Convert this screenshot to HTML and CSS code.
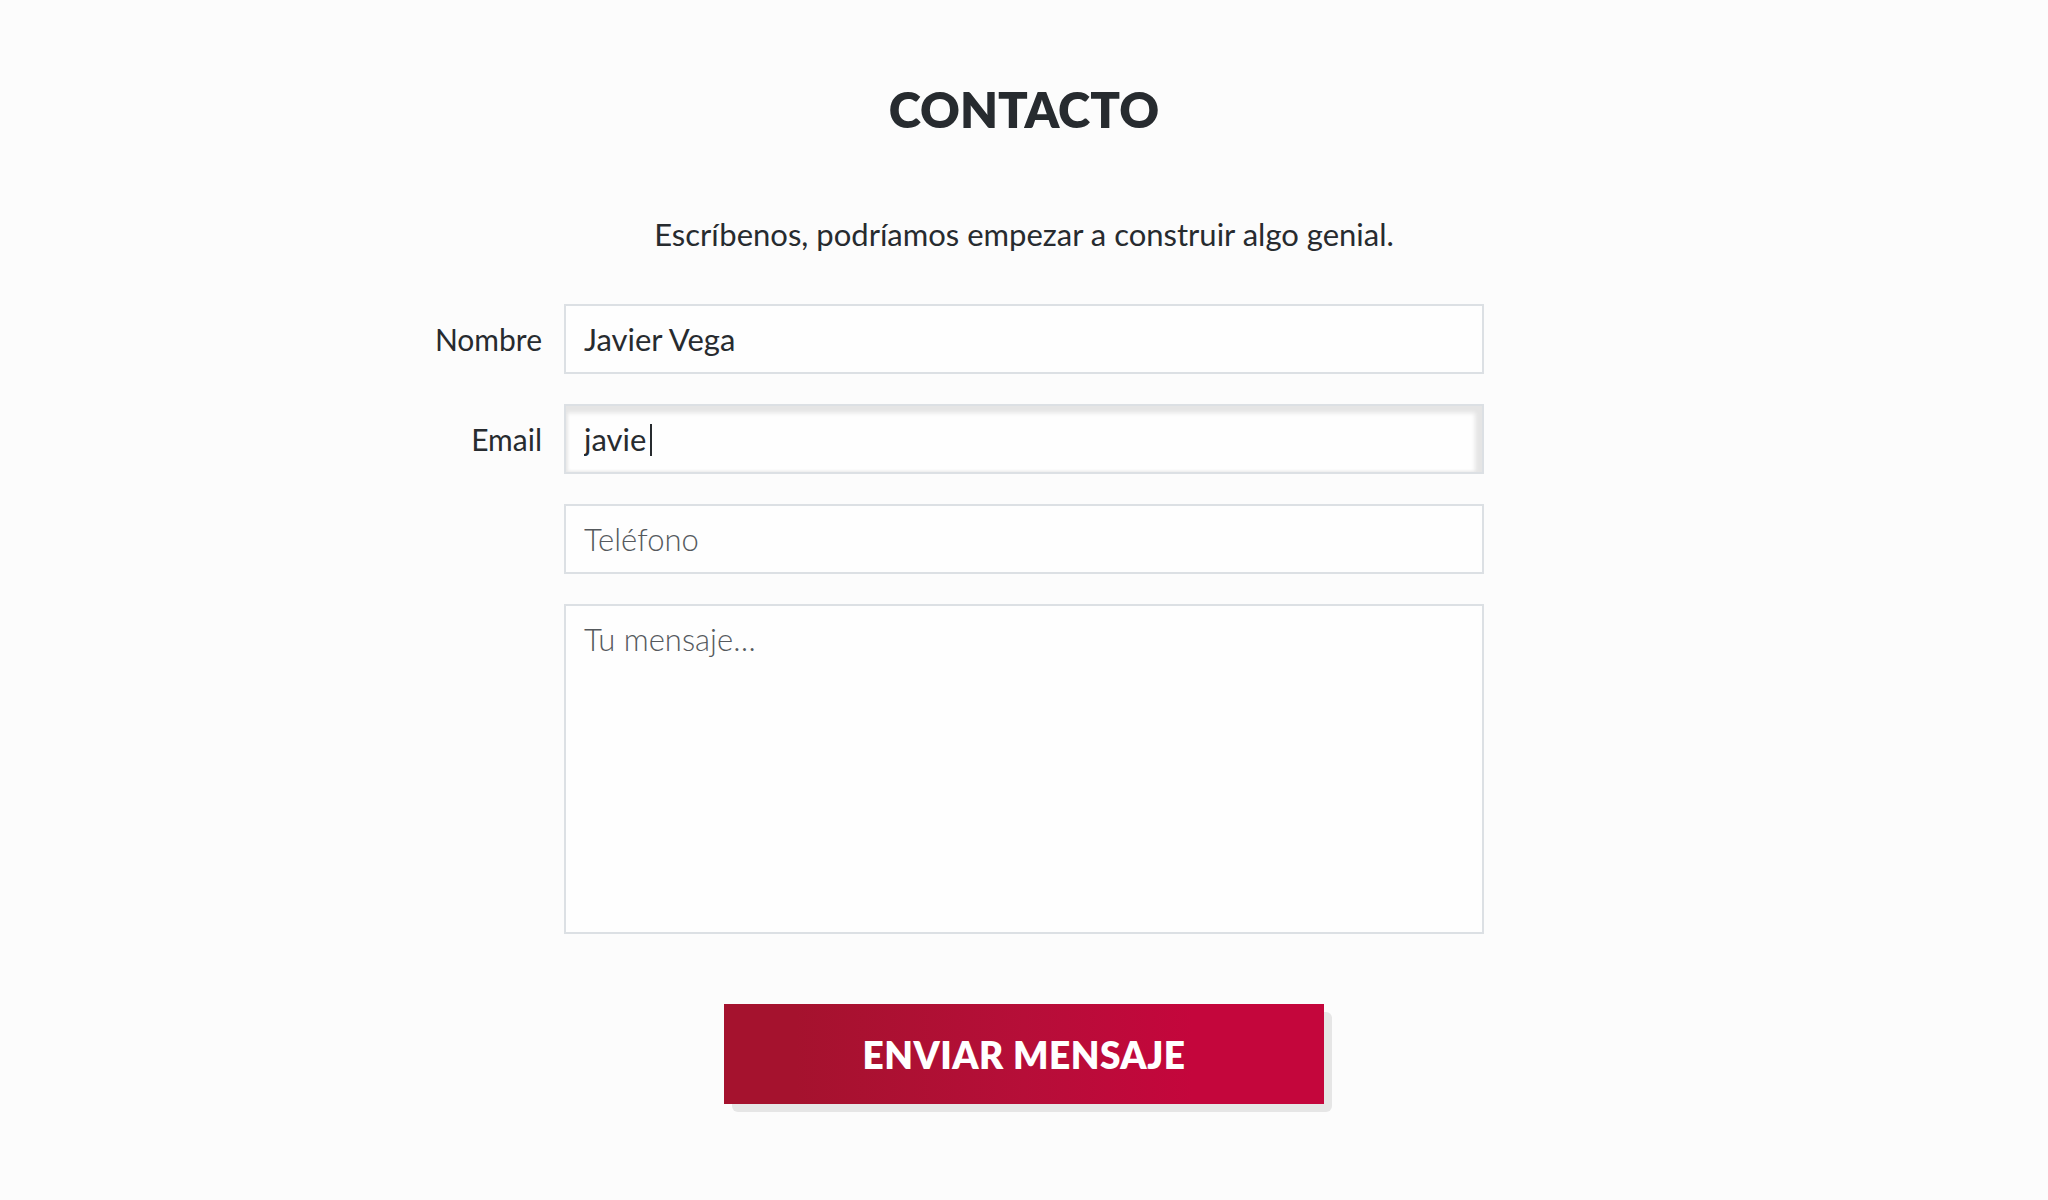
FILE: index.html
```html
<!DOCTYPE html>
<html lang="es">
<head>
  <meta charset="UTF-8">
  <title>Contacto</title>
  <link rel="stylesheet" href="styles.css">
</head>
<body>
<main class="contact">
  <h1 class="contact-title">CONTACTO</h1>
  <p class="contact-lead">Escríbenos, podríamos empezar a construir algo genial.</p>

  <form class="contact-form" onsubmit="return false">
    <div class="row">
      <label for="nombre">Nombre</label>
      <input type="text" id="nombre" class="field" value="Javier Vega">
    </div>
    <div class="row">
      <label for="email">Email</label>
      <div class="field-wrap">
        <input type="email" id="email" class="field field-focus" value="javie">
        <span class="caret"></span>
      </div>
    </div>
    <div class="row">
      <span></span>
      <input type="tel" id="telefono" class="field" placeholder="Teléfono">
    </div>
    <div class="row">
      <span></span>
      <textarea id="mensaje" class="field field-area" placeholder="Tu mensaje…"></textarea>
    </div>
    <div class="actions">
      <button type="submit" class="send">ENVIAR MENSAJE</button>
    </div>
  </form>
</main>
</body>
</html>
```

FILE: styles.css
```css
* {
  box-sizing: border-box;
}

html, body {
  margin: 0;
  padding: 0;
  background: #fcfcfc;
  color: #272b2f;
  font-family: Lato, "Open Sans", sans-serif;
}

.contact {
  padding-top: 78px;
  padding-bottom: 80px;
}

.contact-title {
  margin: 0;
  text-align: center;
  font-size: 49px;
  line-height: 62px;
  font-weight: 800;
}

.contact-lead {
  margin: 76px 0 0;
  text-align: center;
  font-size: 31px;
  line-height: 36px;
}

.contact-form {
  margin-top: 52px;
  display: flex;
  flex-direction: column;
  gap: 30px;
}

.row {
  display: grid;
  grid-template-columns: 1fr 920px 1fr;
  column-gap: 22px;
  align-items: center;
}

.row label {
  text-align: right;
  font-size: 30px;
  color: #272b2f;
}

.field {
  display: block;
  width: 100%;
  height: 70px;
  padding: 0 18px;
  border: 2px solid #dce0e4;
  border-radius: 0;
  background: #fefefe;
  font: 31px Lato, "Open Sans", sans-serif;
  color: #272b2f;
  outline: none;
}

.field::placeholder {
  color: #55595d;
  font-weight: 300;
}

.field-wrap {
  position: relative;
}

.field-focus {
  box-shadow: inset -7px 7px 4px #e5e5e5, inset 2px -1px 3px #e8e8e8;
}

.caret {
  position: absolute;
  left: 86px;
  top: 20px;
  width: 2px;
  height: 32px;
  background: #272b2f;
}

.field-area {
  height: 330px;
  padding-top: 14px;
  resize: none;
}

.actions {
  position: relative;
  z-index: 0;
  margin-top: 40px;
  display: flex;
  justify-content: center;
}

.send {
  position: relative;
  width: 600px;
  height: 100px;
  border: none;
  border-radius: 0;
  background: linear-gradient(90deg, #a5122e 12%, #b60e38 50%, #c4063c 78%);
  color: #fff;
  font: 800 37px Lato, "Open Sans", sans-serif;
  letter-spacing: 0.5px;
  cursor: pointer;
}

/* soft offset shadow with rounded corner, sits behind the button */
.send::after {
  content: "";
  position: absolute;
  left: 8px;
  top: 8px;
  right: -8px;
  bottom: -8px;
  border-radius: 6px;
  background: #e6e6e6;
  z-index: -1;
}
```
